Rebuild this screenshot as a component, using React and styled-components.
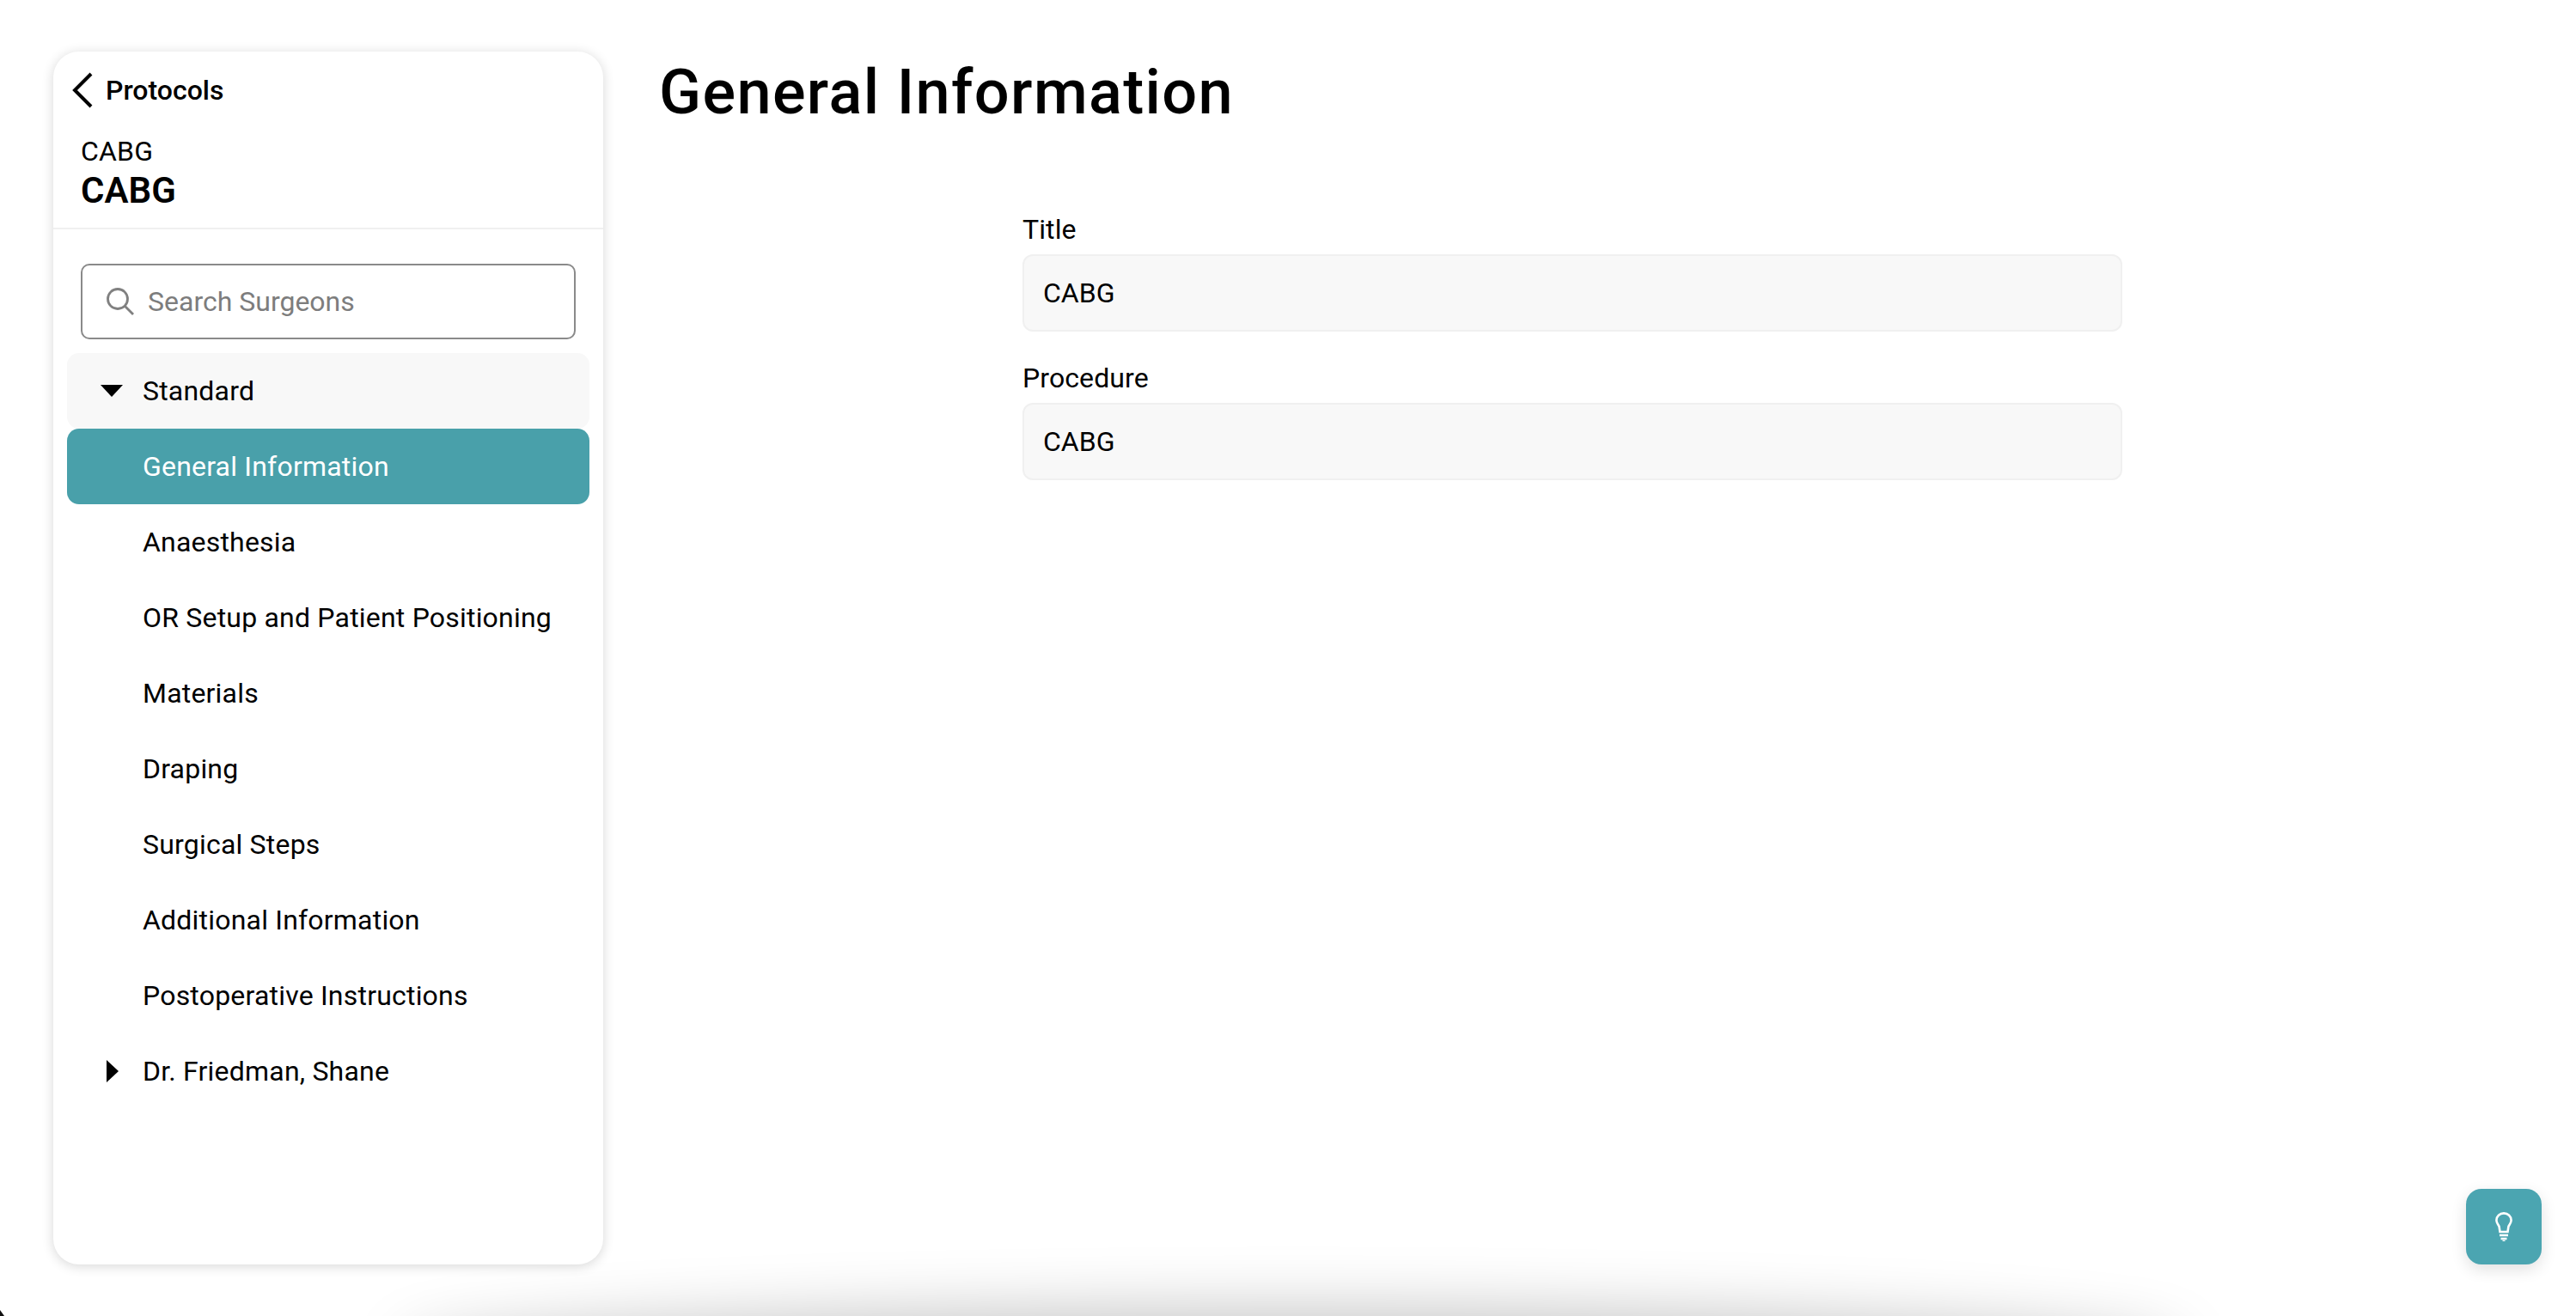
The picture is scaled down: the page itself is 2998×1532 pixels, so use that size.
import React from 'react';
import styled, { createGlobalStyle } from 'styled-components';

const Global = createGlobalStyle`
  html, body { margin: 0; padding: 0; background: #fff; }
  body { font-family: Roboto, "Noto Sans", "Liberation Sans", sans-serif; color: #000; }
`;

const Page = styled.div`
  position: relative;
  width: 2998px;
  height: 1532px;
  overflow: hidden;
  display: flex;
  align-items: flex-start;
  padding: 60px 0 0 62px;
  box-sizing: border-box;
  background: #fff;
`;

const Sidebar = styled.aside`
  width: 640px;
  height: 1412px;
  flex: none;
  box-sizing: border-box;
  background: #fff;
  border-radius: 30px;
  box-shadow: 0 2px 14px rgba(0, 0, 0, 0.16);
  display: flex;
  flex-direction: column;
`;

const Header = styled.header`
  height: 207px;
  box-sizing: border-box;
  border-bottom: 2px solid #f0f0f0;
  display: flex;
  flex-direction: column;
  padding: 0 0 0 32px;
`;

const Back = styled.div`
  display: flex;
  align-items: center;
  gap: 14px;
  height: 48px;
  margin-top: 21px;
  margin-left: -11px;
  font-size: 32px;
  font-weight: 500;
  letter-spacing: 0;
`;

const Eyebrow = styled.div`
  font-size: 32px;
  line-height: 40px;
  margin-top: 27px;
  letter-spacing: 0.2px;
`;

const Name = styled.div`
  font-size: 42px;
  line-height: 48px;
  margin-top: 2px;
  font-weight: 600;
  letter-spacing: 0;
`;

const Body = styled.div`
  padding: 40px 16px 0;
  display: flex;
  flex-direction: column;
`;

const Search = styled.div`
  margin: 0 16px 16px 16px;
  height: 88px;
  box-sizing: border-box;
  border: 2px solid #8a8a8a;
  border-radius: 10px;
  display: flex;
  align-items: center;
  gap: 15px;
  padding-left: 27px;
  font-size: 32px;
  color: #7d7d7d;
`;

const Row = styled.div`
  height: 88px;
  flex: none;
  display: flex;
  align-items: center;
  position: relative;
  padding-left: 88px;
  font-size: 32px;
  letter-spacing: 0.2px;
  border-radius: 14px;
  background: ${p => (p.$active ? '#49a0aa' : p.$muted ? '#f8f8f8' : 'transparent')};
  color: ${p => (p.$active ? '#fff' : '#000')};
`;

const Caret = styled.svg`
  position: absolute;
  left: ${p => p.$left}px;
  top: 50%;
  transform: translateY(-50%);
`;

const Main = styled.main`
  flex: 1;
  display: flex;
  flex-direction: column;
  padding: 0 0 0 65px;
`;

const Title = styled.h1`
  margin: 6px 0 0;
  font-size: 72px;
  line-height: 84px;
  font-weight: 500;
  letter-spacing: 1.4px;
`;

const Form = styled.form`
  width: 1280px;
  margin: 97px 0 0 423px;
  display: flex;
  flex-direction: column;
  gap: 34px;
`;

const Field = styled.div`
  display: flex;
  flex-direction: column;
`;

const Label = styled.label`
  font-size: 32px;
  line-height: 40px;
  margin-bottom: 9px;
  letter-spacing: 0.1px;
`;

const Value = styled.div`
  height: 90px;
  box-sizing: border-box;
  background: #f8f8f8;
  border: 2px solid #f0f0f0;
  border-radius: 12px;
  display: flex;
  align-items: center;
  padding-left: 22px;
  font-size: 32px;
`;

const Fab = styled.button`
  position: absolute;
  left: 2870px;
  top: 1384px;
  width: 88px;
  height: 88px;
  border: 0;
  padding: 0;
  border-radius: 18px;
  background: #4ba5b1;
  box-shadow: 0 6px 18px rgba(0, 0, 0, 0.12);
  display: flex;
  align-items: center;
  justify-content: center;
`;

const FloorShadow = styled.div`
  position: absolute;
  left: 500px;
  width: 2010px;
  top: 1576px;
  height: 40px;
  border-radius: 50%;
  box-shadow: 0 -20px 70px 34px rgba(0, 0, 0, 0.22);
`;

const Corner = styled.div`
  position: absolute;
  left: 0;
  bottom: 0;
  width: 5px;
  height: 7px;
  background: #111;
  clip-path: polygon(0 0, 100% 100%, 0 100%);
`;

const items = [
  'Anaesthesia',
  'OR Setup and Patient Positioning',
  'Materials',
  'Draping',
  'Surgical Steps',
  'Additional Information',
  'Postoperative Instructions',
];

export default function App() {
  return (
    <Page>
      <Global />
      <Sidebar>
        <Header>
          <Back>
            <svg width="26" height="42" viewBox="0 0 26 42" fill="none">
              <path d="M23 2 L4 21 L23 40" stroke="#000" strokeWidth="4" />
            </svg>
            Protocols
          </Back>
          <Eyebrow>CABG</Eyebrow>
          <Name>CABG</Name>
        </Header>
        <Body>
          <Search>
            <svg width="34" height="34" viewBox="0 0 34 34" fill="none" stroke="#808080" strokeWidth="2.8">
              <circle cx="14" cy="14" r="11.5" />
              <path d="M22.5 22.5 L32 32" />
            </svg>
            Search Surgeons
          </Search>
          <Row $muted>
            <Caret $left={38} width="28" height="16" viewBox="0 0 28 16">
              <path d="M1 1 H27 L14 15 Z" fill="#000" />
            </Caret>
            Standard
          </Row>
          <Row $active>General Information</Row>
          {items.map(t => (
            <Row key={t}>{t}</Row>
          ))}
          <Row>
            <Caret $left={46} width="14" height="26" viewBox="0 0 14 26">
              <path d="M0 0 L14 13 L0 26 Z" fill="#000" />
            </Caret>
            Dr. Friedman, Shane
          </Row>
        </Body>
      </Sidebar>
      <Main>
        <Title>General Information</Title>
        <Form>
          <Field>
            <Label>Title</Label>
            <Value>CABG</Value>
          </Field>
          <Field>
            <Label>Procedure</Label>
            <Value>CABG</Value>
          </Field>
        </Form>
      </Main>
      <Fab aria-label="Tips">
        <svg width="20" height="34" viewBox="0 0 20 34" fill="none" stroke="#fff" strokeWidth="2.6">
          <path d="M5.5 23 L4.6 17 C3.8 14.5 1.4 13 1.4 9.6 C1.4 4.8 5.2 1.4 10 1.4 C14.8 1.4 18.6 4.8 18.6 9.6 C18.6 13 16.2 14.5 15.4 17 L14.5 23 Z" />
          <path d="M5 27 H15 M6.5 31 H13.5" />
          <path d="M8.5 33.4 H11.5" strokeWidth="1.6" />
        </svg>
      </Fab>
      <FloorShadow />
      <Corner />
    </Page>
  );
}
